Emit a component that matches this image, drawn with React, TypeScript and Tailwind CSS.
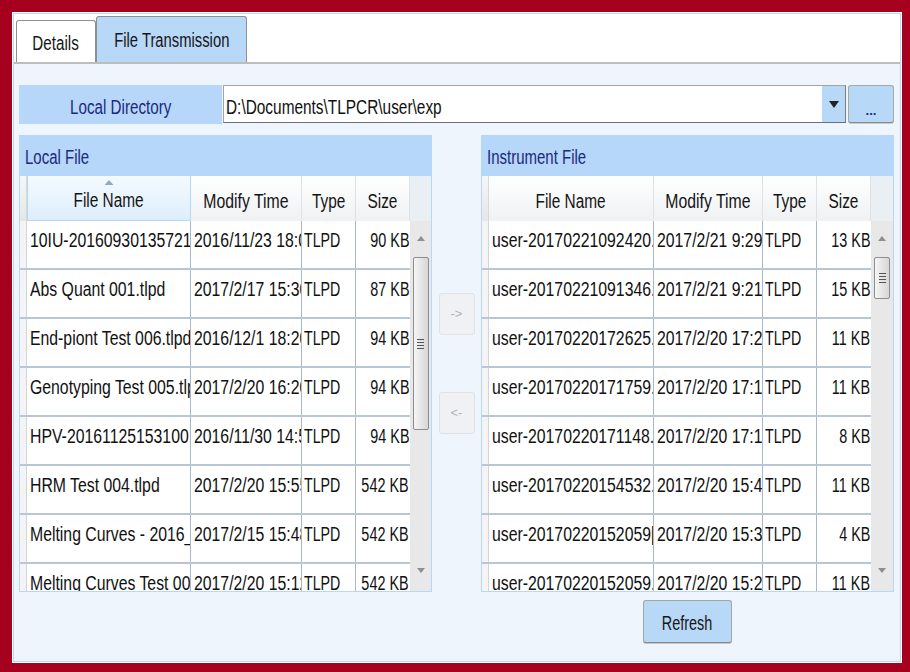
import React from 'react'

type Row = { name: string; time: string; type: string; size: string }

const localRows: Row[] = [
  { name: '10IU-20160930135721.tlpd', time: '2016/11/23 18:05', type: 'TLPD', size: '90 KB' },
  { name: 'Abs Quant 001.tlpd', time: '2017/2/17 15:30', type: 'TLPD', size: '87 KB' },
  { name: 'End-piont Test 006.tlpd', time: '2016/12/1 18:20', type: 'TLPD', size: '94 KB' },
  { name: 'Genotyping Test 005.tlpd', time: '2017/2/20 16:20', type: 'TLPD', size: '94 KB' },
  { name: 'HPV-20161125153100.tlpd', time: '2016/11/30 14:52', type: 'TLPD', size: '94 KB' },
  { name: 'HRM Test 004.tlpd', time: '2017/2/20 15:55', type: 'TLPD', size: '542 KB' },
  { name: 'Melting Curves - 2016_11.tlpd', time: '2017/2/15 15:48', type: 'TLPD', size: '542 KB' },
  { name: 'Melting Curves Test 003.tlpd', time: '2017/2/20 15:12', type: 'TLPD', size: '542 KB' }
]

const instrumentRows: Row[] = [
  { name: 'user-20170221092420.tlpd', time: '2017/2/21 9:29', type: 'TLPD', size: '13 KB' },
  { name: 'user-20170221091346.tlpd', time: '2017/2/21 9:21', type: 'TLPD', size: '15 KB' },
  { name: 'user-20170220172625.tlpd', time: '2017/2/20 17:26', type: 'TLPD', size: '11 KB' },
  { name: 'user-20170220171759.tlpd', time: '2017/2/20 17:17', type: 'TLPD', size: '11 KB' },
  { name: 'user-20170220171148.tlpd', time: '2017/2/20 17:11', type: 'TLPD', size: '8 KB' },
  { name: 'user-20170220154532.tlpd', time: '2017/2/20 15:45', type: 'TLPD', size: '11 KB' },
  { name: 'user-20170220152059[1].tlpd', time: '2017/2/20 15:31', type: 'TLPD', size: '4 KB' },
  { name: 'user-20170220152059.tlpd', time: '2017/2/20 15:20', type: 'TLPD', size: '11 KB' }
]

// the UI font is a tall, narrow one; squeeze Liberation Sans to match it
const origins = {
  left: 'origin-left',
  center: 'origin-center',
  right: 'origin-right'
}

const T: React.FC<{ children: React.ReactNode; o?: 'left' | 'center' | 'right'; s?: string }> = ({
  children,
  o = 'left',
  s = 'scale-x-[0.79]'
}) => <span className={`inline-block whitespace-nowrap ${origins[o]} ${s}`}>{children}</span>

interface GridProps {
  title: string
  rows: Row[]
  nameW: string
  timeW: string
  sorted?: boolean
  thumbH: string
}

const ArrowUp = () => (
  <svg width="8" height="5" viewBox="0 0 8 5">
    <path d="M0 5 L4 0 L8 5 Z" fill="#8f8f8f" />
  </svg>
)

const ArrowDown = () => (
  <svg width="8" height="5" viewBox="0 0 8 5">
    <path d="M0 0 L8 0 L4 5 Z" fill="#8f8f8f" />
  </svg>
)

const ScrollBar: React.FC<{ thumbH: string }> = ({ thumbH }) => (
  <div className="flex-1 bg-[#e8e8e8] flex flex-col items-center">
    <div className="mt-[15px]">
      <ArrowUp />
    </div>
    <div
      className={`mt-[16px] w-[16px] ${thumbH} rounded-[2px] border border-[#8d8d8d] bg-linear-to-r from-[#f6f6f6] to-[#d6d6d6] flex flex-col items-center justify-center gap-[2px]`}
    >
      <div className="w-[7px] h-px bg-[#555]" />
      <div className="w-[7px] h-px bg-[#555]" />
      <div className="w-[7px] h-px bg-[#555]" />
      <div className="w-[7px] h-px bg-[#555]" />
    </div>
    <div className="flex-1" />
    <div className="mb-[18px]">
      <ArrowDown />
    </div>
  </div>
)

const FileGrid: React.FC<GridProps> = ({ title, rows, nameW, timeW, sorted, thumbH }) => {
  return (
    <div className="w-[413px] h-[457px] flex flex-col">
      <div className="h-[41px] bg-[#b6d6fa] flex items-center pl-[6px] pt-[2px] text-[20px] text-[#1c2a7c]">
        <T s="scale-x-[0.75]">{title}</T>
      </div>
      <div className="flex-1 min-h-0 flex flex-col border-x border-b border-[#b6d6fa] bg-white">
        {/* column headers */}
        <div className="h-[45px] flex text-[20px] text-[#141414]">
          <div className="w-[7px] bg-linear-to-b from-[#f7f7f7] to-[#e6e6e6] border-r border-[#d3d9df]" />
          <div
            className={`${nameW} relative flex items-center justify-center pt-[4px] border-r ${
              sorted
                ? 'bg-linear-to-b from-[#f4fafe] to-[#ddeefb] border-[#b5d9f3] border-l border-b'
                : 'bg-linear-to-b from-white to-[#eff1f3] border-[#dde2e7]'
            }`}
          >
            {sorted && (
              <svg className="absolute top-[4px] left-1/2 -translate-x-1/2" width="9" height="5" viewBox="0 0 9 5">
                <path d="M0 5 L4.5 0 L9 5 Z" fill="#97aabd" />
              </svg>
            )}
            <T o="center" s="scale-x-[0.77]">File Name</T>
          </div>
          <div className={`${timeW} flex items-center justify-center pt-[4px] border-r border-[#dde2e7] bg-linear-to-b from-white to-[#eff1f3]`}>
            <T o="center" s="scale-x-[0.79]">Modify Time</T>
          </div>
          <div className="w-[54px] flex items-center justify-center pt-[4px] border-r border-[#dde2e7] bg-linear-to-b from-white to-[#eff1f3]">
            <T o="center" s="scale-x-[0.77]">Type</T>
          </div>
          <div className="w-[54px] flex items-center justify-center pt-[4px] border-r border-[#dde2e7] bg-linear-to-b from-white to-[#eff1f3]">
            <T o="center" s="scale-x-[0.77]">Size</T>
          </div>
          <div className="flex-1 bg-[#eaeff4]" />
        </div>

        {/* rows */}
        <div className="flex-1 min-h-0 flex">
          <div className="overflow-hidden flex flex-col text-[20px] leading-[20px] text-[#111]">
            {rows.map((r, i) => (
              <div key={i} className="h-[49px] shrink-0 flex border-b-2 border-[#b9c6d5]">
                <div className="w-[7px] bg-[#f4f4f4] border-r border-[#cfd6de]" />
                <div className={`${nameW} pl-[3px] pt-[9px] overflow-hidden border-r border-[#a9b8c9]`}>
                  <T>{r.name}</T>
                </div>
                <div className={`${timeW} pl-[3px] pt-[9px] overflow-hidden border-r border-[#a9b8c9]`}>
                  <T>{r.time}</T>
                </div>
                <div className="w-[54px] pl-[2px] pt-[9px] overflow-hidden border-r border-[#a9b8c9]">
                  <T s="scale-x-[0.71]">{r.type}</T>
                </div>
                <div className="w-[54px] pr-px pt-[9px] overflow-hidden flex justify-end items-start">
                  <T o="right" s="scale-x-[0.72]">{r.size}</T>
                </div>
              </div>
            ))}
          </div>
          <ScrollBar thumbH={thumbH} />
        </div>
      </div>
    </div>
  )
}

const MoveButton: React.FC<{ label: string; className?: string }> = ({ label, className }) => (
  <div
    className={`w-[36px] h-[42px] rounded-[3px] border border-[#dfe3e8] bg-[#eff1f4] flex items-center justify-center text-[13px] text-[#b3b3b3] ${className ?? ''}`}
  >
    {label}
  </div>
)

export default function App() {
  return (
    <div className="w-[910px] h-[672px] bg-[#a6001f] pl-[12px] pt-[12px] pr-[8px] pb-[9px] font-['Liberation_Sans',Arial,sans-serif]">
      <div className="h-full bg-white p-px">
        <div className="h-full flex flex-col border border-[#bcd8f6]">
          {/* tab strip */}
          <div className="h-[50px] shrink-0 bg-white border-b-2 border-[#bdbdbd] flex items-end pl-[2px] text-[20px] text-[#161616]">
            <div className="w-[80px] h-[42px] bg-white border border-b-0 border-[#8f8f8f] rounded-t-[3px] flex items-center justify-center pt-[3px]">
              <T o="center" s="scale-x-[0.76]">Details</T>
            </div>
            <div className="w-[151px] h-[46px] bg-[#b8d8f8] border border-b-0 border-[#8f8f8f] rounded-t-[3px] flex items-center justify-center">
              <T o="center" s="scale-x-[0.74]">File Transmission</T>
            </div>
          </div>

          {/* content */}
          <div className="flex-1 bg-[#eef5fd] pl-[5px] pr-[6px] pt-[21px]">
            {/* local directory */}
            <div className="flex h-[39px]">
              <div className="w-[203px] bg-[#b6d6fa] flex items-center justify-center pt-[4px] text-[20px] text-[#1c2a7c]">
                <T o="center" s="scale-x-[0.76]">Local Directory</T>
              </div>
              <div className="ml-px w-[623px] h-[38px] bg-white border border-[#a3a3a3] border-b-[#6f6f6f] border-r-[#7a7a7a] flex items-stretch">
                <div className="flex-1 pl-[2px] pt-[11px] text-[20px] leading-[20px] text-[#111]">
                  <T s="scale-x-[0.77]">{'D:\\Documents\\TLPCR\\user\\exp'}</T>
                </div>
                <div className="w-[23px] bg-[#b8d8f8] flex items-center justify-center">
                  <svg width="10" height="7" viewBox="0 0 10 7">
                    <path d="M0 0 L10 0 L5 7 Z" fill="#222" />
                  </svg>
                </div>
              </div>
              <div className="ml-[2px] w-[46px] h-[38px] rounded-[3px] bg-[#b8d8f8] border border-[#a8a8a8] border-b-[#8a8a8a] shadow-[0_1px_0_#c9c9c9] flex items-end justify-center pb-[5px] text-[13px] font-bold leading-none text-[#1c2a7c]">
                ...
              </div>
            </div>

            {/* file panels */}
            <div className="flex mt-[11px]">
              <FileGrid
                title="Local File"
                rows={localRows}
                nameW="w-[164px]"
                timeW="w-[111px]"
                sorted
                thumbH="h-[173px]"
              />
              <div className="w-[49px] flex flex-col items-center pt-[158px]">
                <MoveButton label="->" />
                <MoveButton label="<-" className="mt-[57px]" />
              </div>
              <FileGrid
                title="Instrument File"
                rows={instrumentRows}
                nameW="w-[165px]"
                timeW="w-[109px]"
                thumbH="h-[42px]"
              />
            </div>

            {/* refresh */}
            <div className="flex justify-end mt-[8px]">
              <div className="w-[413px] flex justify-center">
                <div className="w-[89px] h-[43px] rounded-[3px] bg-[#b8d8f8] border border-[#a5a5a5] border-b-[#8a8a8a] shadow-[0_1px_0_#c4c4c4] flex items-center justify-center pt-[2px] text-[20px] text-[#161616]">
                  <T o="center" s="scale-x-[0.72]">Refresh</T>
                </div>
              </div>
            </div>
          </div>
        </div>
      </div>
    </div>
  )
}
